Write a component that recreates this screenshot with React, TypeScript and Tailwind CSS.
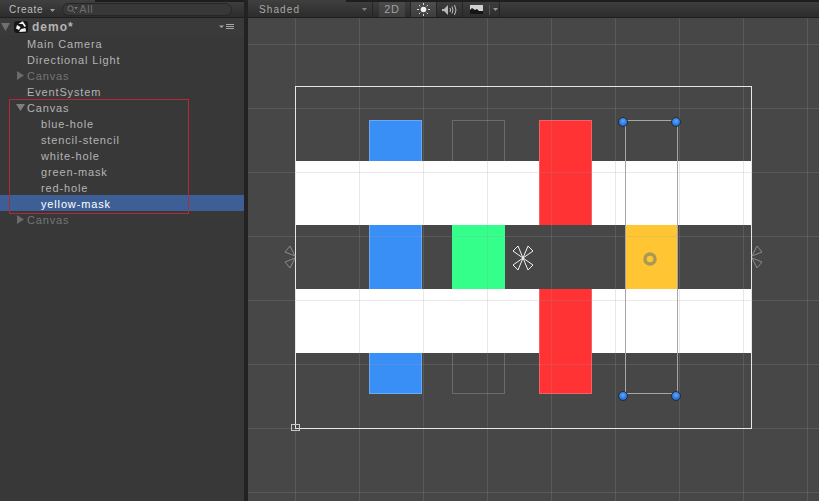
const FONT = "font-['Liberation_Sans',sans-serif]";

function Arrow({ open }: { open?: boolean }) {
  return (
    <svg width="9" height="9" viewBox="0 0 9 9" className="shrink-0">
      {open ? <path d="M0 1h9L4.500 8z" fill="#7f7f7f" /> : <path d="M1 0v9l7-4.500z" fill="#6a6a6a" />}
    </svg>
  );
}

function Row({ label, depth = 0, arrow, open, dim, selected }: { label: string; depth?: number; arrow?: boolean; open?: boolean; dim?: boolean; selected?: boolean }) {
  return (
    <div className={`flex h-4 shrink-0 items-center ${selected ? "bg-[#3d5f96] text-white" : dim ? "text-[#757575]" : "text-[#b4b4b4]"}`}>
      <div className={depth === 1 ? "w-[41px] shrink-0" : "flex w-[27px] shrink-0 justify-end pr-[2px]"}>{arrow && <Arrow open={open} />}</div>
      <span className="mt-[2px] whitespace-nowrap text-[11px] tracking-[0.85px]">{label}</span>
    </div>
  );
}

function Hierarchy() {
  return (
    <aside className="relative flex w-[244px] shrink-0 flex-col bg-[#383838]">
      <div className="relative flex h-[18px] shrink-0 items-center border-b border-[#1e1e1e] bg-gradient-to-b from-[#404040] to-[#2c2c2c] pt-[2px]">
        <div className="absolute right-0 top-0 h-[2px] w-[149px] bg-[#1e1e1e]" />
        <span className="ml-[9px] text-[10px] tracking-[0.7px] text-[#bdbdbd]">Create</span>
        <svg width="5" height="3" viewBox="0 0 5 3" className="ml-[7px] mt-[2px]"><path d="M0 0h5L2.500 3z" fill="#a0a0a0" /></svg>
        <div className="ml-[7px] flex h-[13px] w-[170px] items-center rounded-full border border-[#262626] bg-[#383838] pl-[4px]">
          <svg width="11" height="9" viewBox="0 0 11 9"><circle cx="3.500" cy="3.500" r="2.600" fill="none" stroke="#777" /><path d="M5.500 5.500L8 8" stroke="#777" /><path d="M7 2h4L9 4.500z" fill="#777" /></svg>
          <span className="ml-[1px] text-[11px] leading-none tracking-[0.6px] text-[#6e6e6e]">All</span>
        </div>
      </div>
      <div className="flex h-[17px] shrink-0 items-center bg-[#3a3a3a]">
        <svg width="9" height="8" viewBox="0 0 9 8" className="ml-[1px]"><path d="M0 0h9L4.500 8z" fill="#707070" /></svg>
        <svg width="14" height="14" viewBox="0 0 14 14" className="ml-[4px]">
          <rect x="0" y="1" width="14" height="12" rx="3" fill="#161616" />
          <path d="M9 1.500l3 4.500-1.500 1L8.500 4 4.500 4 8 1.500z" fill="#f2f2f2" />
          <path d="M3 5l3.500 2 -1.500 3-3-1.500z" fill="#f2f2f2" />
          <path d="M11.500 8l0.500 3.500-7 0.500 2-3z" fill="#f2f2f2" />
        </svg>
        <span className="ml-[4px] text-[12px] font-bold tracking-[1px] text-[#b4b4b4]">demo*</span>
        <svg width="16" height="6" viewBox="0 0 16 6" className="ml-auto mr-[9px]">
          <path d="M0 1.500h5L2.500 4z" fill="#a8a8a8" />
          <path d="M7 0.500h8M7 2.500h8M7 4.500h8" stroke="#a8a8a8" />
        </svg>
      </div>
      <Row label="Main Camera" />
      <Row label="Directional Light" />
      <Row label="Canvas" arrow dim />
      <Row label="EventSystem" />
      <Row label="Canvas" arrow open />
      <Row label="blue-hole" depth={1} />
      <Row label="stencil-stencil" depth={1} />
      <Row label="white-hole" depth={1} />
      <Row label="green-mask" depth={1} />
      <Row label="red-hole" depth={1} />
      <Row label="yellow-mask" depth={1} selected />
      <Row label="Canvas" arrow dim />
      <div className="absolute left-[9px] top-[99px] h-[115px] w-[180px] border border-[#b22a37]" />
    </aside>
  );
}

function ToolButton({ active, children, width }: { active?: boolean; children: React.ReactNode; width: string }) {
  return (
    <div className={`flex h-full items-center justify-center border-r border-[#242424] ${width} ${active ? "bg-gradient-to-b from-[#4e4e4e] to-[#3e3e3e]" : ""}`}>
      {children}
    </div>
  );
}

function SceneToolbar() {
  return (
    <div className="relative flex h-[18px] shrink-0 items-center border-b border-[#1e1e1e] bg-gradient-to-b from-[#404040] to-[#2c2c2c] pt-[2px] text-[#a8a8a8]">
      <div className="absolute right-0 top-0 h-[2px] w-[473px] bg-[#1e1e1e]" />
      <div className="flex h-full w-[125px] items-center justify-between border-r border-[#242424] pl-[11px] pr-[5px]">
        <span className="text-[10px] tracking-[1.1px]">Shaded</span>
        <svg width="5" height="3" viewBox="0 0 5 3"><path d="M0 0h5L2.500 3z" fill="#808080" /></svg>
      </div>
      <div className="w-[6px]" />
      <div className="flex h-full w-[26px] items-center justify-center bg-gradient-to-b from-[#4a4a4a] to-[#3e3e3e]">
        <span className="text-[11px] tracking-[0.8px] text-[#a0a0a0]">2D</span>
      </div>
      <div className="h-full w-[6px] border-r border-[#242424]" />
      <ToolButton active width="w-[26px]">
        <svg width="13" height="13" viewBox="0 0 13 13">
          <circle cx="6.500" cy="6.500" r="2.800" fill="#f0f0f0" />
          <path d="M6.500 0v2M6.500 11v2M0 6.500h2M11 6.500h2M2 2l1.300 1.300M9.700 9.700L11 11M2 11l1.300-1.300M9.700 3.300L11 2" stroke="#d8d8d8" />
        </svg>
      </ToolButton>
      <ToolButton width="w-[26px]">
        <svg width="15" height="12" viewBox="0 0 15 12">
          <path d="M0 5h2l4-4v10L2 7H0z" fill="#b8b8b8" />
          <path d="M8 4q1 2 0 4M10 2.500q2 3.500 0 7M12.500 1q3 5 0 10" fill="none" stroke="#c0c0c0" />
        </svg>
      </ToolButton>
      <div className="flex h-full w-[37px] items-center border-r border-[#242424] pl-[7px]">
        <svg width="13" height="9" viewBox="0 0 13 9">
          <rect width="13" height="9" fill="#d0d0d0" />
          <path d="M0 9V5l2-2 3 2 2-1 2 2 4 0v3z" fill="#151515" />
        </svg>
        <div className="ml-[6px] h-[10px] w-px bg-[#555]" />
        <svg width="5" height="3" viewBox="0 0 5 3" className="ml-[3px]"><path d="M0 0h5L2.500 3z" fill="#999" /></svg>
      </div>
      <div className="flex-1" />
    </div>
  );
}

const VERT = [295, 359, 423, 487, 551, 615, 679, 743, 807];
const HORIZ = [44, 108, 172, 236, 300, 364, 428, 492];

function Scene() {
  return (
    <div className="relative flex-1 overflow-hidden bg-[#474747]">
      {/* white bands */}
      <div className="absolute left-[47px] top-[143px] h-[64px] w-[456px] bg-white" />
      <div className="absolute left-[47px] top-[271px] h-[64px] w-[456px] bg-white" />
      {/* blue strip, covered by bands */}
      <div className="absolute left-[121px] top-[102px] h-[41px] w-[53px] border border-b-0 border-[#6aa9f5] bg-[#3a8ff7]" />
      <div className="absolute left-[121px] top-[207px] h-[64px] w-[53px] border-x border-[#6aa9f5] bg-[#3a8ff7]" />
      <div className="absolute left-[121px] top-[335px] h-[41px] w-[53px] border border-t-0 border-[#6aa9f5] bg-[#3a8ff7]" />
      {/* stencil outline and green */}
      <div className="absolute left-[204px] top-[102px] h-[41px] w-[53px] border border-b-0 border-[#6b6b6b]" />
      <div className="absolute left-[204px] top-[335px] h-[41px] w-[53px] border border-t-0 border-[#6b6b6b]" />
      <div className="absolute left-[204px] top-[207px] h-[64px] w-[53px] bg-[#35ff8b]" />
      {/* red */}
      <div className="absolute left-[291px] top-[102px] h-[105px] w-[53px] border border-b-0 border-[#f2606a] bg-[#ff3333]" />
      <div className="absolute left-[291px] top-[271px] h-[105px] w-[53px] border border-t-0 border-[#f2606a] bg-[#ff3333]" />
      {/* yellow */}
      <div className="absolute left-[377px] top-[207px] h-[64px] w-[53px] bg-[#ffc533]" />

      <svg className="absolute left-0 top-0" width="571" height="483" viewBox="248 18 571 483" shapeRendering="crispEdges">
        {VERT.map((x) => <path key={x} d={`M${x + 0.5} 18V501`} stroke="#999" strokeOpacity="0.22" />)}
        {HORIZ.map((y) => <path key={y} d={`M248 ${y + 0.5}H819`} stroke="#999" strokeOpacity="0.22" />)}
        <rect x="295.500" y="86.500" width="456" height="342" fill="none" stroke="#e6e6e6" />
        <rect x="291.500" y="424.500" width="8" height="6" fill="none" stroke="#c8c8c8" />
        {/* selected rect */}
        <rect x="625.500" y="120.500" width="52" height="273" fill="none" stroke="#a6a6a6" />
      </svg>

      <svg className="absolute left-0 top-0" width="571" height="483" viewBox="248 18 571 483">
        <defs>
          <radialGradient id="h" cx="0.5" cy="0.4" r="0.6">
            <stop offset="0" stopColor="#5aa8ff" />
            <stop offset="1" stopColor="#1660d0" />
          </radialGradient>
        </defs>
        {[[623, 122], [676, 122], [623, 396], [676, 396]].map(([x, y]) => (
          <circle key={`${x}-${y}`} cx={x} cy={y} r="4.500" fill="url(#h)" stroke="#2a2a2a" strokeWidth="1" />
        ))}
        {/* pivot */}
        <circle cx="650" cy="259" r="5" fill="none" stroke="#a89a55" strokeWidth="3.500" />
        {/* move cross */}
        <g fill="none" stroke="#f2f2f2" strokeWidth="1">
          <path d="M523 258l-10-7 5-5zM523 258l10-7-5-5zM523 258l-10 7 5 5zM523 258l10 7-5 5z" />
        </g>
        {/* anchor arrows */}
        <g fill="none" stroke="#8a8a8a" strokeWidth="1">
          <path d="M295 256l-10-4 5-6zM295 258l-10 4 5 6z" />
          <path d="M752 256l10-4-5-6zM752 258l10 4-5 6z" />
        </g>
      </svg>
    </div>
  );
}

export default function App() {
  return (
    <div className={`flex h-[501px] w-[819px] overflow-hidden bg-[#1f1f1f] ${FONT}`}>
      <Hierarchy />
      <div className="w-[4px] shrink-0 bg-[#222]" />
      <div className="flex min-w-0 flex-1 flex-col">
        <SceneToolbar />
        <Scene />
      </div>
    </div>
  );
}
